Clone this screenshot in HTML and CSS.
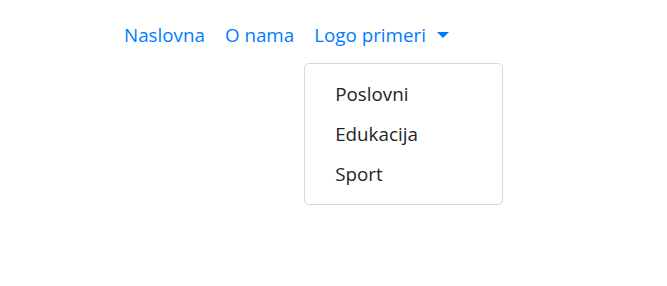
FILE: index.html
```html
<!DOCTYPE html>
<html lang="sr">
<head>
<meta charset="utf-8">
<link rel="stylesheet" href="styles.css">
</head>
<body>
<nav class="topnav">
  <ul class="links">
    <li class="item"><a class="link" href="#">Naslovna</a></li>
    <li class="item"><a class="link" href="#">O nama</a></li>
    <li class="item has-menu">
      <a class="link toggle" href="#">Logo primeri</a>
      <div class="menu">
        <a class="menu-entry" href="#">Poslovni</a>
        <a class="menu-entry" href="#">Edukacija</a>
        <a class="menu-entry" href="#">Sport</a>
      </div>
    </li>
  </ul>
</nav>
</body>
</html>
```
FILE: styles.css
```css
html, body {
  margin: 0;
  padding: 0;
  background: #fff;
}
body {
  font-family: "Open Sans", "Noto Sans", sans-serif;
  font-size: 18.8px;
  line-height: 30px;
  color: #212529;
  min-height: 286px;
}
.topnav {
  padding: 10px 20px 10px 114px;
}
.links {
  list-style: none;
  margin: 0;
  padding: 0;
  display: flex;
}
.item {
  position: relative;
}
.link {
  display: block;
  padding: 10px 10px;
  color: #007bff;
  text-decoration: none;
}
.toggle::after {
  content: "";
  display: inline-block;
  margin-left: 11px;
  vertical-align: 4px;
  border-top: 6px solid #007bff;
  border-left: 6px solid transparent;
  border-right: 6px solid transparent;
}
.menu {
  position: absolute;
  top: 100%;
  left: 0;
  margin-top: 3px;
  width: 199px;
  padding: 10px 0;
  background: #fff;
  border: 1px solid #d9d9d9;
  border-radius: 5px;
  box-sizing: border-box;
  display: flex;
  flex-direction: column;
}
.menu-entry {
  display: block;
  height: 30px;
  padding: 5px 30px;
  color: #212529;
  text-decoration: none;
  white-space: nowrap;
}
```
